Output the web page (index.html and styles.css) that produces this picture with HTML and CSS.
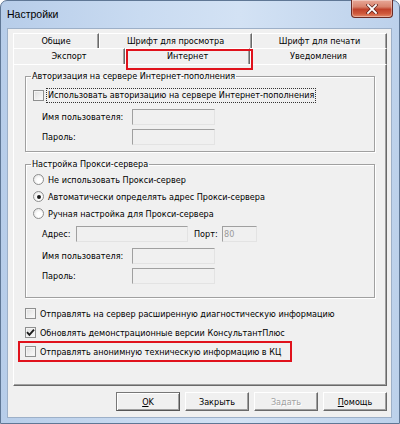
FILE: index.html
```html
<!DOCTYPE html>
<html lang="ru">
<head>
<meta charset="utf-8">
<title>Настройки</title>
<link rel="stylesheet" href="styles.css">
</head>
<body>
<div class="window">
  <div class="titlebar">
    <span class="title">Настройки</span>
    <span class="close">
      <svg width="12" height="10" viewBox="0 0 12 10"><path d="M2 1 L10 9 M10 1 L2 9" stroke="#5a1f1a" stroke-width="3.2" stroke-linecap="square"/><path d="M2 1 L10 9 M10 1 L2 9" stroke="#fff" stroke-width="1.8" stroke-linecap="square"/></svg>
    </span>
  </div>
  <div class="client">
    <div class="tabrow row1">
      <div class="tab t-general">Общие</div>
      <div class="tab t-view">Шрифт для просмотра</div>
      <div class="tab t-print">Шрифт для печати</div>
    </div>
    <div class="tabrow row2">
      <div class="tab t-export">Экспорт</div>
      <div class="tab t-internet marked">Интернет</div>
      <div class="tab t-notify">Уведомления</div>
    </div>
    <div class="panel">
      <fieldset class="group g1">
        <legend>Авторизация на сервере Интернет-пополнения</legend>
        <div class="opt opt-focus"><span class="cb"></span><span class="focus">Использовать авторизацию на сервере Интернет-пополнения</span></div>
        <div class="field f-name"><span class="flabel">Имя пользователя:</span><span class="input w-user"></span></div>
        <div class="field f-pass"><span class="flabel">Пароль:</span><span class="input w-user"></span></div>
      </fieldset>
      <fieldset class="group g2">
        <legend>Настройка Прокси-сервера</legend>
        <div class="opt radio-row"><span class="rb"></span><span class="otext">Не использовать Прокси-сервер</span></div>
        <div class="opt radio-row"><span class="rb on"></span><span class="otext">Автоматически определять адрес Прокси-сервера</span></div>
        <div class="opt radio-row"><span class="rb"></span><span class="otext">Ручная настройка для Прокси-сервера</span></div>
        <div class="field f-addr"><span class="flabel l-addr">Адрес:</span><span class="input w-addr"></span><span class="flabel l-port">Порт:</span><span class="input w-port">80</span></div>
        <div class="field f-name2"><span class="flabel">Имя пользователя:</span><span class="input w-user"></span></div>
        <div class="field f-pass"><span class="flabel">Пароль:</span><span class="input w-user"></span></div>
      </fieldset>
      <div class="opt bottom-opt first"><span class="cb"></span><span class="otext">Отправлять на сервер расширенную диагностическую информацию</span></div>
      <div class="opt bottom-opt"><span class="cb checked"><svg width="9" height="9" viewBox="0 0 9 9"><path d="M1 4.2 L3.4 6.8 L8 1.6" fill="none" stroke="#1c1c1c" stroke-width="1.9"/></svg></span><span class="otext">Обновлять демонстрационные версии КонсультантПлюс</span></div>
      <div class="opt bottom-opt marked-row"><span class="cb"></span><span class="otext">Отправлять анонимную техническую информацию в КЦ</span></div>
    </div>
    <div class="buttons">
      <span class="btn default"><u>O</u>K</span>
      <span class="btn">Закрыть</span>
      <span class="btn disabled">Задать</span>
      <span class="btn"><u>П</u>омощь</span>
    </div>
  </div>
</div>
</body>
</html>
```

FILE: styles.css
```css
* { box-sizing: border-box; }

html, body {
  margin: 0;
  padding: 0;
  background: #ffffff;
}

body {
  font-family: "DejaVu Sans Condensed", "DejaVu Sans", sans-serif;
  font-stretch: condensed;
  font-size: 9px;
  color: #000;
}

.window {
  width: 400px;
  height: 424px;
  display: flex;
  flex-direction: column;
  padding: 0 7px 5px 6px;
  border: 1px solid #5f7795;
  border-radius: 7px 7px 0 0;
  background: linear-gradient(to right, #b7cde9 0%, #c9dbf1 35%, #d3e2f4 60%, #bcd1eb 100%);
}

.titlebar {
  height: 27px;
  flex: none;
  display: flex;
  justify-content: space-between;
  align-items: flex-start;
}

.title {
  padding-top: 6px;
  font-family: "Liberation Sans", Arial, sans-serif;
  font-stretch: normal;
  font-size: 10.5px;
  line-height: 14px;
  color: #000;
}

.close {
  width: 42px;
  height: 18px;
  margin-top: -1px;
  margin-right: -1px;
  display: flex;
  align-items: center;
  justify-content: center;
  border: 1px solid #6b2b24;
  border-top: none;
  border-radius: 0 0 4px 4px;
  background: linear-gradient(#e8a898 0%, #d8836d 40%, #c0422b 55%, #cf5a3c 80%, #e38a6a 100%);
  box-shadow: inset 0 0 0 1px rgba(255, 255, 255, 0.35);
}

.client {
  flex: 1;
  background: #f0f0f0;
  border: 1px solid #9db0c8;
  padding: 4px 4px 0 5px;
}

.tabrow {
  display: flex;
}

.row1 { height: 15px; }
.row2 { height: 16px; }

.tab {
  text-align: center;
  line-height: 14px;
  border-top: 1px solid #fff;
  border-left: 1px solid #fff;
  border-right: 1px solid #696969;
  box-shadow: inset -1px 0 #a0a0a0;
  white-space: nowrap;
}

.row2 .tab { line-height: 15px; }

.t-general { width: 86px; }
.t-view { width: 153px; }
.t-print { width: 135px; }
.t-export { width: 112px; }
.t-internet { width: 125px; }
.t-notify { width: 137px; }

.marked { position: relative; }
.marked::after {
  content: "";
  position: absolute;
  left: 0;
  top: 0;
  width: 123px;
  height: 17px;
  border: 2px solid #e0121c;
}

.panel {
  width: 374px;
  height: 322px;
  border: 1px solid;
  border-color: #fff #696969 #696969 #fff;
  box-shadow: inset -1px -1px #a0a0a0;
  padding: 4px 11px 0 11px;
}

fieldset.group {
  margin: 0;
  width: 350px;
  border: 1px solid #a0a0a0;
  box-shadow: inset 1px 1px #fff, 1px 1px #fff;
  padding: 4px 0 6px 7px;
}

fieldset.group legend {
  padding: 0 1px;
  margin-left: -2px;
  line-height: 14px;
}

.g2 {
  margin-top: 5px !important;
  padding-top: 0 !important;
  padding-bottom: 13px !important;
}

.opt {
  display: flex;
  align-items: center;
  white-space: nowrap;
}

.opt-focus { height: 16px; }

.focus {
  margin-left: 2px;
  padding: 0 1px;
  line-height: 13px;
  border: 1px dotted #333;
}

.radio-row { height: 17px; }

.otext { margin-left: 4px; }

.cb {
  width: 11px;
  height: 11px;
  flex: none;
  display: flex;
  align-items: center;
  justify-content: center;
  border: 1px solid #8e8f8f;
  background: linear-gradient(135deg, #dedede, #fbfbfb);
  box-shadow: inset 0 0 0 1px #f4f4f4;
}

.rb {
  width: 11px;
  height: 11px;
  flex: none;
  border-radius: 50%;
  border: 1px solid #8e8f8f;
  background: radial-gradient(circle at 60% 60%, #fff 30%, #dcdcdc 100%);
  display: flex;
  align-items: center;
  justify-content: center;
}

.rb.on::before {
  content: "";
  width: 4px;
  height: 4px;
  border-radius: 50%;
  background: #1a1a1a;
}

.field {
  display: flex;
  align-items: center;
  height: 16px;
  padding-left: 9px;
  white-space: nowrap;
}

.f-name { margin-top: 6px; }
.f-pass { margin-top: 4px; }
.f-addr { margin-top: 4px; }
.f-name2 { margin-top: 6px; }

.flabel { width: 90px; flex: none; }
.l-addr { width: 34px; }
.l-port { width: 28px; margin-left: 6px; }

.input {
  height: 16px;
  flex: none;
  border: 1px solid;
  border-color: #a0a0a0 #e3e3e3 #e3e3e3 #a0a0a0;
  background: #f0f0f0;
  color: #9a9a9a;
  line-height: 14px;
  padding-left: 1px;
}

.w-user { width: 83px; }
.w-addr { width: 112px; }
.w-port { width: 35px; }

.bottom-opt { height: 17px; }
.bottom-opt.first { margin-top: 7px; }
.bottom-opt + .bottom-opt { margin-top: 2px; }

.marked-row {
  margin-left: -7px;
  margin-top: 0 !important;
  width: 274px;
  height: 21px;
  padding-left: 5px;
  border: 2px solid #e0121c;
}

.buttons {
  display: flex;
  justify-content: flex-end;
  gap: 5px;
  margin-top: 6px;
  width: 374px;
}

.btn {
  width: 64px;
  height: 19px;
  display: flex;
  align-items: center;
  justify-content: center;
  border: 1px solid;
  border-color: #fff #696969 #696969 #fff;
  box-shadow: inset -1px -1px #a0a0a0;
  background: #f0f0f0;
}

.btn.default {
  border-color: #777 #555 #555 #777;
  box-shadow: inset 1px 1px #fff, inset -1px -1px #a0a0a0;
}

.btn.disabled { color: #a0a0a0; text-shadow: 1px 1px #fff; }
```
